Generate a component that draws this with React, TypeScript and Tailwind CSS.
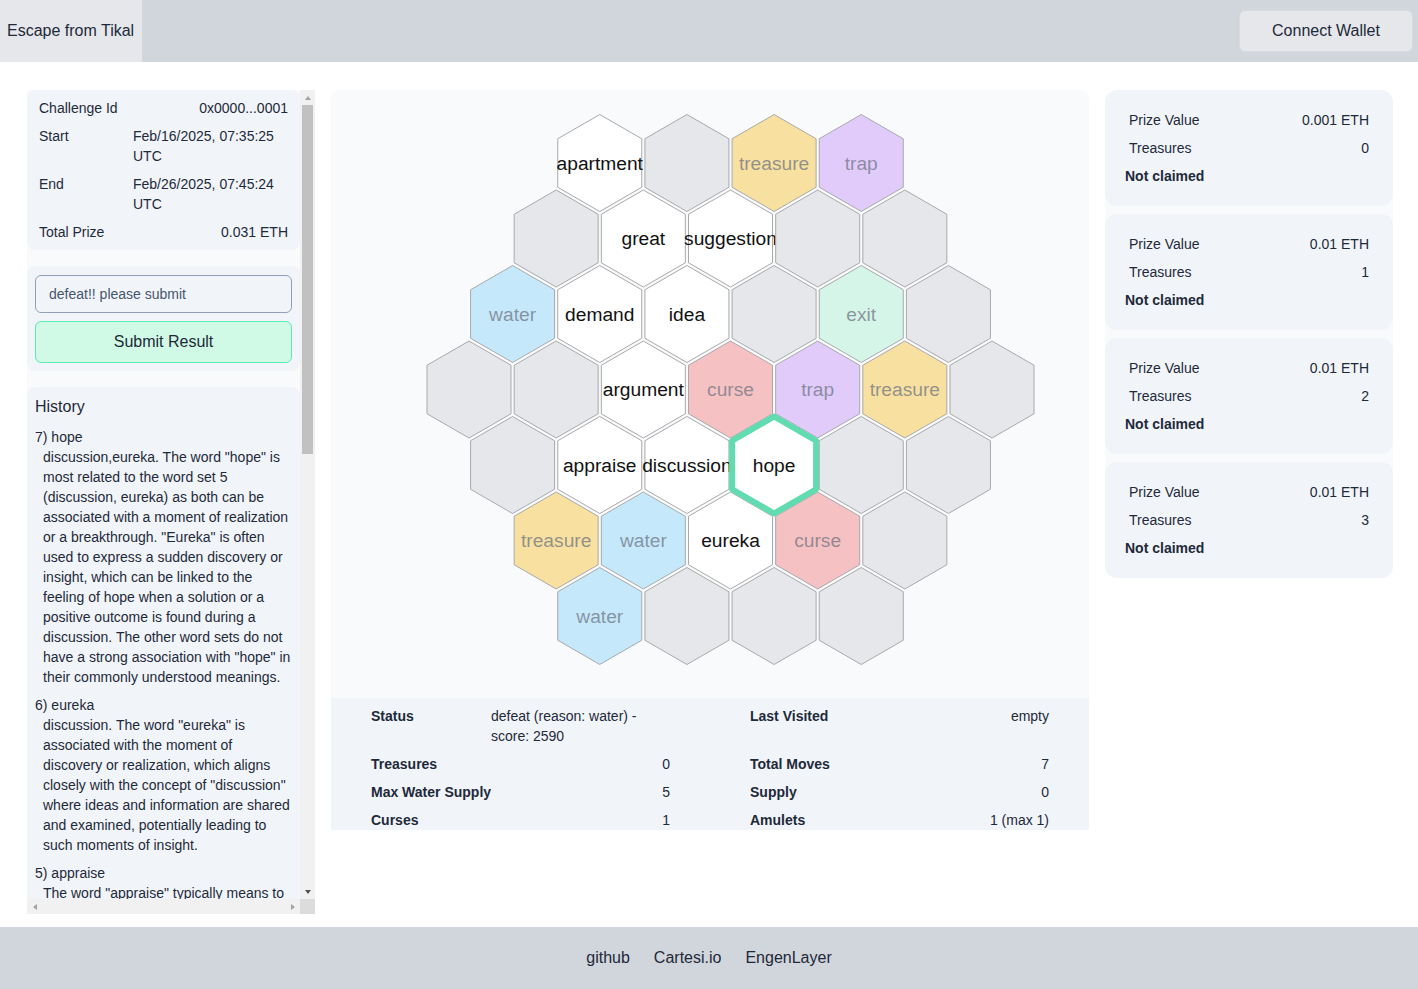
import React from "react";

type Kind = "empty" | "word" | "treasure" | "trap" | "water" | "exit" | "curse";

const FILL: Record<Kind, string> = {
  empty: "#e6e7ea",
  word: "#ffffff",
  treasure: "#f8e0a0",
  trap: "#e0cbfa",
  water: "#c6e8fb",
  exit: "#d6f5e9",
  curse: "#f6c1c3",
};

// rows of the board, top to bottom; "" = empty cell
const board: [Kind, string][][] = [
  [["word", "apartment"], ["empty", ""], ["treasure", "treasure"], ["trap", "trap"]],
  [["empty", ""], ["word", "great"], ["word", "suggestion"], ["empty", ""], ["empty", ""]],
  [["water", "water"], ["word", "demand"], ["word", "idea"], ["empty", ""], ["exit", "exit"], ["empty", ""]],
  [["empty", ""], ["empty", ""], ["word", "argument"], ["curse", "curse"], ["trap", "trap"], ["treasure", "treasure"], ["empty", ""]],
  [["empty", ""], ["word", "appraise"], ["word", "discussion"], ["word", "hope"], ["empty", ""], ["empty", ""]],
  [["treasure", "treasure"], ["water", "water"], ["word", "eureka"], ["curse", "curse"], ["empty", ""]],
  [["water", "water"], ["empty", ""], ["empty", ""], ["empty", ""]],
];

const STEP_X = 87.17;
const STEP_Y = 75.5;
const R = 48.5;
const HX = 42;

function hexPoints(cx: number, cy: number) {
  return [
    [cx, cy - R],
    [cx + HX, cy - R / 2],
    [cx + HX, cy + R / 2],
    [cx, cy + R],
    [cx - HX, cy + R / 2],
    [cx - HX, cy - R / 2],
  ]
    .map((p) => p.join(","))
    .join(" ");
}

function HexBoard() {
  const cells: { x: number; y: number; kind: Kind; label: string; current: boolean }[] = [];
  board.forEach((row, r) => {
    row.forEach(([kind, label], i) => {
      cells.push({
        x: 138 + Math.abs(r - 3) * (STEP_X / 2) + i * STEP_X,
        y: 73 + r * STEP_Y,
        kind,
        label,
        current: label === "hope",
      });
    });
  });
  // draw the current cell last so its border sits on top
  const ordered = [...cells.filter((c) => !c.current), ...cells.filter((c) => c.current)];

  return (
    <svg width="758" height="608" className="block">
      {ordered.map((c, idx) => (
        <g key={idx}>
          <polygon
            points={hexPoints(c.x, c.y)}
            fill={FILL[c.kind]}
            stroke={c.current ? "#60dcb0" : "#a9a9ab"}
            strokeWidth={c.current ? 6 : 1}
            strokeLinejoin="round"
          />
          {c.label && (
            <text
              x={c.x}
              y={c.y}
              textAnchor="middle"
              dominantBaseline="central"
              fontFamily="'Liberation Sans', Arial, sans-serif"
              fontSize="19.2"
              fill={c.kind === "word" ? "#111111" : "#6b7280"}
              fillOpacity={c.kind === "word" ? 1 : 0.72}
            >
              {c.label}
            </text>
          )}
        </g>
      ))}
    </svg>
  );
}

const history = [
  {
    n: 7,
    word: "hope",
    text: 'discussion,eureka. The word "hope" is most related to the word set 5 (discussion, eureka) as both can be associated with a moment of realization or a breakthrough. "Eureka" is often used to express a sudden discovery or insight, which can be linked to the feeling of hope when a solution or a positive outcome is found during a discussion. The other word sets do not have a strong association with "hope" in their commonly understood meanings.',
  },
  {
    n: 6,
    word: "eureka",
    text: 'discussion. The word "eureka" is associated with the moment of discovery or realization, which aligns closely with the concept of "discussion" where ideas and information are shared and examined, potentially leading to such moments of insight.',
  },
  {
    n: 5,
    word: "appraise",
    text: 'The word "appraise" typically means to evaluate or assess the value, quality, or importance of something. This is most closely related to the word set (argument, discussion), since appraising often involves weighing arguments and discussing different points of view before reaching a judgement. The other word sets are less related to the act of evaluation.',
  },
  {
    n: 4,
    word: "discussion",
    text: 'argument,idea. The word "discussion" is most related to the word set 2 (argument, idea) because a discussion usually involves exchanging ideas and presenting arguments to support them.',
  },
];

const prizes = [
  { value: "0.001 ETH", treasures: 0 },
  { value: "0.01 ETH", treasures: 1 },
  { value: "0.01 ETH", treasures: 2 },
  { value: "0.01 ETH", treasures: 3 },
];

// small triangle for the scrollbar buttons
function Arrow({ dir, color }: { dir: "up" | "down" | "left" | "right"; color: string }) {
  if (dir === "up")
    return <div className="w-0 h-0 border-x-[3.5px] border-x-transparent border-b-[4px]" style={{ borderBottomColor: color }} />;
  if (dir === "down")
    return <div className="w-0 h-0 border-x-[3.5px] border-x-transparent border-t-[4px]" style={{ borderTopColor: color }} />;
  if (dir === "left")
    return <div className="w-0 h-0 border-y-[3.5px] border-y-transparent border-r-[4px]" style={{ borderRightColor: color }} />;
  return <div className="w-0 h-0 border-y-[3.5px] border-y-transparent border-l-[4px]" style={{ borderLeftColor: color }} />;
}

export default function App() {
  return (
    <div className="min-h-screen flex flex-col bg-white text-gray-800 font-['Liberation_Sans',Arial,sans-serif]">
      {/* Header */}
      <header className="h-[62px] bg-gray-300 flex items-center justify-between">
        <div className="h-full bg-gray-200 flex items-center pl-[7px] pr-2 text-base">Escape from Tikal</div>
        <button className="mr-[5px] h-[42px] w-[174px] rounded-md bg-gray-200 border border-[#d8dadf] text-base">
          Connect Wallet
        </button>
      </header>

      {/* Main */}
      <main className="h-[865px] flex gap-4 px-[27px] pt-7 pb-[13px]">
        {/* Left column, with its scrollbars */}
        <div className="w-[288px] h-[824px] shrink-0 grid grid-cols-[273px_15px] grid-rows-[809px_15px] bg-slate-50">
          <div className="overflow-hidden flex flex-col gap-4">
            <div className="shrink-0 rounded-lg bg-slate-100 px-3 py-2 text-sm leading-5 flex flex-col gap-2">
              <div className="flex justify-between">
                <span>Challenge Id</span>
                <span>0x0000...0001</span>
              </div>
              <div className="grid grid-cols-[94px_1fr]">
                <span>Start</span>
                <span>Feb/16/2025, 07:35:25 UTC</span>
              </div>
              <div className="grid grid-cols-[94px_1fr]">
                <span>End</span>
                <span>Feb/26/2025, 07:45:24 UTC</span>
              </div>
              <div className="flex justify-between">
                <span>Total Prize</span>
                <span>0.031 ETH</span>
              </div>
            </div>

            <div className="shrink-0 rounded-lg bg-slate-100 px-2 pt-[9px] pb-2 flex flex-col gap-2">
              <input
                readOnly
                value="defeat!! please submit"
                className="h-[38px] w-full rounded-md border border-slate-400 bg-transparent px-[13px] text-sm text-slate-600 outline-none"
              />
              <button className="h-[42px] w-full rounded-md border border-emerald-300 bg-emerald-100 text-base text-gray-800">
                Submit Result
              </button>
            </div>

            <div className="shrink-0 rounded-lg bg-slate-100 px-2 py-2">
              <h2 className="text-base leading-6 mb-2">History</h2>
              {history.map((h) => (
                <div key={h.n} className="mb-2 text-sm leading-5">
                  <div>
                    {h.n}) {h.word}
                  </div>
                  <p className="pl-2">{h.text}</p>
                </div>
              ))}
            </div>
          </div>

          {/* vertical scrollbar */}
          <div className="bg-[#f1f1f1] flex flex-col">
            <div className="h-[15px] flex items-center justify-center">
              <Arrow dir="up" color="#a3a3a3" />
            </div>
            <div className="flex-1 flex flex-col">
              <div className="h-[349px] mx-[2px] bg-[#c1c1c1]" />
            </div>
            <div className="h-[15px] flex items-center justify-center">
              <Arrow dir="down" color="#505050" />
            </div>
          </div>

          {/* horizontal scrollbar */}
          <div className="bg-[#f1f1f1] flex items-center justify-between">
            <div className="w-[15px] flex justify-center">
              <Arrow dir="left" color="#a3a3a3" />
            </div>
            <div className="w-[15px] flex justify-center">
              <Arrow dir="right" color="#a3a3a3" />
            </div>
          </div>
          <div className="bg-[#dcdcdc]" />
        </div>

        {/* Center */}
        <div className="w-[758px] shrink-0 self-start">
          <div className="h-[608px] bg-gray-50 rounded-t-lg overflow-hidden">
            <HexBoard />
          </div>
          <div className="bg-slate-100 px-10 pt-2 grid grid-cols-2 gap-x-20 gap-y-2 text-sm leading-5">
            <div className="grid grid-cols-[120px_1fr]">
              <span className="font-bold">Status</span>
              <span>defeat (reason: water) - score: 2590</span>
            </div>
            <div className="flex justify-between">
              <span className="font-bold">Last Visited</span>
              <span>empty</span>
            </div>
            <div className="flex justify-between">
              <span className="font-bold">Treasures</span>
              <span>0</span>
            </div>
            <div className="flex justify-between">
              <span className="font-bold">Total Moves</span>
              <span>7</span>
            </div>
            <div className="flex justify-between">
              <span className="font-bold">Max Water Supply</span>
              <span>5</span>
            </div>
            <div className="flex justify-between">
              <span className="font-bold">Supply</span>
              <span>0</span>
            </div>
            <div className="flex justify-between">
              <span className="font-bold">Curses</span>
              <span>1</span>
            </div>
            <div className="flex justify-between">
              <span className="font-bold">Amulets</span>
              <span>1 (max 1)</span>
            </div>
          </div>
        </div>

        {/* Right column */}
        <div className="w-[288px] shrink-0 self-start bg-slate-50 rounded-xl flex flex-col gap-2">
          {prizes.map((p, i) => (
            <div key={i} className="rounded-xl bg-slate-100 p-5 text-sm leading-5 flex flex-col gap-2">
              <div className="flex justify-between px-1">
                <span>Prize Value</span>
                <span>{p.value}</span>
              </div>
              <div className="flex justify-between px-1">
                <span>Treasures</span>
                <span>{p.treasures}</span>
              </div>
              <div className="font-bold">Not claimed</div>
            </div>
          ))}
        </div>
      </main>

      {/* Footer */}
      <footer className="h-[62px] bg-gray-300 flex items-center justify-center gap-6 text-base">
        <a href="#">github</a>
        <a href="#">Cartesi.io</a>
        <a href="#">EngenLayer</a>
      </footer>
    </div>
  );
}
